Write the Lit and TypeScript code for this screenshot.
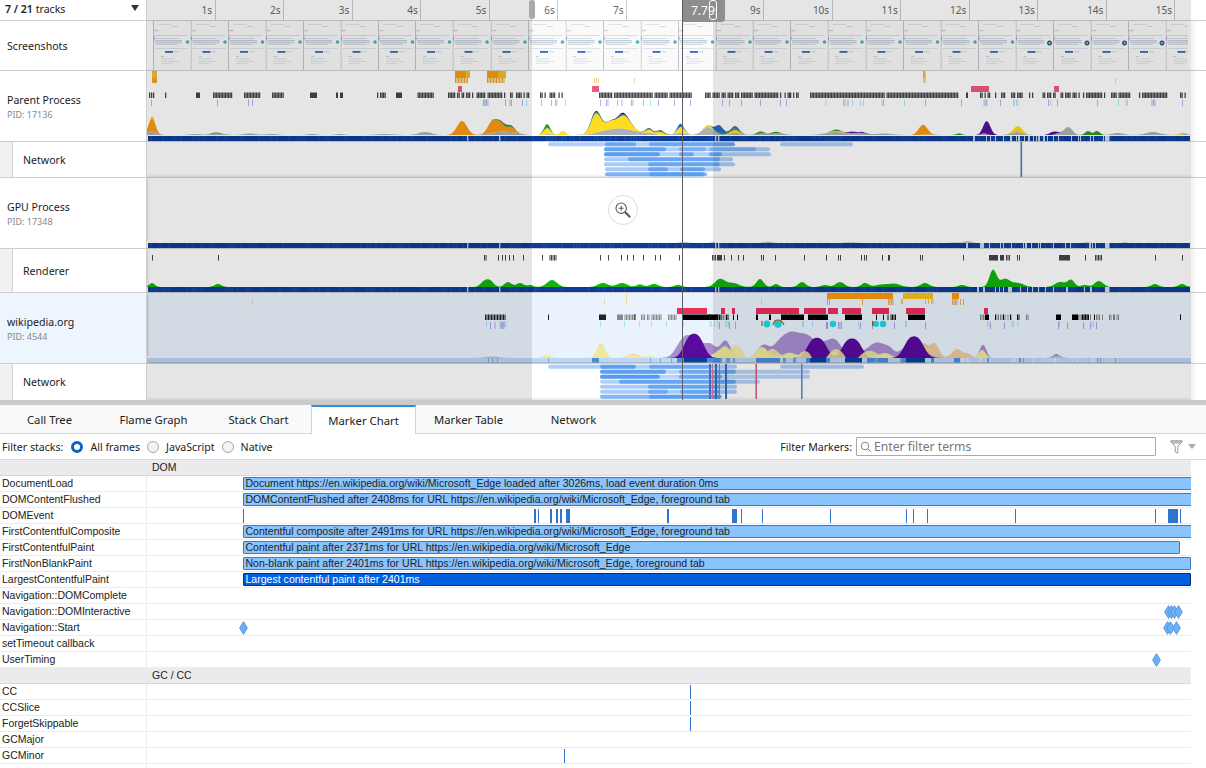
import { LitElement, html, css, svg } from "lit";
import { customElement } from "lit/decorators.js";

type Bump = [number, number, number];
type Layer = { color: string; bumps: Bump[]; stroke?: string };

function rng(seed: number) {
  let s = seed;
  return () => {
    s = (s * 16807) % 2147483647;
    return (s - 1) / 2147483646;
  };
}

function area(layers: Layer[], base: number, x0 = 147, x1 = 1191) {
  const below: number[] = [];
  for (let x = x0; x <= x1; x++) below.push(0);
  return layers.map((l) => {
    let top = "";
    let bottom = "";
    const next = below.slice();
    for (let i = 0; i < next.length; i++) {
      const x = x0 + i;
      let h = 0;
      for (const [c, w, a] of l.bumps) {
        const d = (x - c) / w;
        if (Math.abs(d) < 3.2) h += a * Math.exp(-d * d);
      }
      next[i] = below[i] + h;
      top += `${x},${(base - next[i]).toFixed(2)} `;
    }
    for (let i = next.length - 1; i >= 0; i--) {
      bottom += `${x0 + i},${(base - below[i]).toFixed(2)} `;
      below[i] = next[i];
    }
    return svg`<polygon points="${top}${bottom}" fill="${l.color}" />`;
  });
}

function ticks(
  ranges: number[][],
  y: number,
  h: number,
  color: string,
  seed: number,
  density = 0.62,
  width = 1
) {
  const r = rng(seed);
  const out: unknown[] = [];
  for (const [a, b, d] of ranges) {
    const dn = d === undefined ? density : d;
    if (b === undefined || b - a < 1.5) {
      out.push(svg`<rect x="${a}" y="${y}" width="${width}" height="${h}" fill="${color}" />`);
      continue;
    }
    if (dn >= 1) {
      out.push(svg`<rect x="${a}" y="${y}" width="${b - a}" height="${h}" fill="${color}" />`);
      continue;
    }
    for (let x = a; x < b; x += 1.5) {
      if (r() < dn) out.push(svg`<rect x="${x}" y="${y}" width="${width}" height="${h}" fill="${color}" />`);
    }
  }
  return out;
}

function blocks(list: number[][], y: number, h: number, color: string) {
  return list.map(
    ([a, b]) => svg`<rect x="${a}" y="${y}" width="${b - a}" height="${h}" fill="${color}" />`
  );
}

function sampleBar(y: number, h: number, seed: number, gapFrom = 965) {
  const r = rng(seed);
  const out: unknown[] = [svg`<rect x="148" y="${y}" width="1042" height="${h}" fill="#0b3d98" />`];
  for (let x = 150; x < 1190; x += 3) {
    if (r() < 0.4) out.push(svg`<rect x="${x}" y="${y}" width="2" height="${h}" fill="#1a4fa6" opacity=".6" />`);
  }
  for (const x of [467, 499, 715, 718]) out.push(svg`<rect x="${x}" y="${y}" width="1.4" height="${h}" fill="#dfe8f5" opacity=".8" />`);
  for (let x = gapFrom; x < 1105; x += 1) {
    if (r() < 0.2) out.push(svg`<rect x="${x}" y="${y}" width="1" height="${h}" fill="#e8eef8" opacity=".85" />`);
  }
  out.push(svg`<rect x="1105" y="${y}" width="4.5" height="${h}" fill="#e8eef8" opacity=".9" />`);
  return out;
}

const THUMB_X = [153, 190.5, 228, 265.5, 303, 340.5, 378, 415, 452.5, 490.5, 528, 565.5, 603, 640.5, 678, 715.5, 752.5, 790, 827.5, 865.5, 903, 940.5, 978, 1015.5, 1053, 1090.5, 1128, 1165.5];

function thumbs() {
  return svg`
    <svg class="g" viewBox="147 21 1044 49" width="1044" height="49">
      <defs>
        <g id="th">
          <rect x="0" y="0" width="37.5" height="49" fill="#fafafb" />
          <rect x="0" y="0" width="1" height="49" fill="#c4c4c6" />
          <rect x="5" y="3" width="14" height="1" fill="#e2e2e5" />
          <rect x="19" y="5" width="6" height="1" fill="#d8d8dc" />
          <rect x="0.5" y="9" width="5" height="1.2" fill="#cfcfd3" />
          <rect x="0.5" y="14" width="34" height="1" fill="#dcdce0" />
          <rect x="0.5" y="15.5" width="1" height="4" fill="#b89ae0" />
          <rect x="2" y="17" width="24" height="1" fill="#d5dbe3" />
          <rect x="2" y="19" width="27" height="1.4" fill="#c4cfdc" />
          <rect x="2" y="21" width="27" height="1.4" fill="#ccd6e1" />
          <rect x="3" y="23" width="22" height="1" fill="#d6dce4" />
          <rect x="2" y="27" width="33" height="1" fill="#dfe4ea" />
          <rect x="12" y="30" width="8" height="1.8" fill="#2f6cc2" />
          <rect x="21" y="30.4" width="5" height="1" fill="#d2d5da" />
          <rect x="8" y="35" width="3" height="1" fill="#cfd1d6" />
          <rect x="8" y="37.5" width="14" height="1" fill="#dcdee2" />
          <rect x="8" y="40" width="18" height="1" fill="#e0e2e6" />
          <rect x="8" y="42" width="12" height="1" fill="#e5e6e9" />
        </g>
      </defs>
      ${THUMB_X.map((x, i) => {
        const w = i === THUMB_X.length - 1 ? 23 : 37.5;
        return svg`
          <svg x="${x}" y="21" width="${w}" height="49" viewBox="0 0 ${w} 49"><use href="#th" /></svg>
          ${i >= 23 && i < 27
            ? svg`<circle cx="${x + 34}" cy="43" r="2.2" fill="#1b7d9a" stroke="#123a6b" stroke-width=".6" /><circle cx="${x + 34}" cy="43" r=".8" fill="#e8f4f8" />`
            : i < 27
              ? svg`<circle cx="${x + 34.5}" cy="42" r="1.8" fill="#49b5b0" />`
              : null}
        `;
      })}
      <rect x="1188" y="21" width="3" height="49" fill="#ffffff" />
    </svg>`;
}

function parentGraph() {
  const grey: Layer = {
    color: "#b0b0b0",
    bumps: [[152, 6, 4], [195, 7, 1], [217, 9, 1.5], [250, 9, 1.5], [272, 8, 1], [312, 6, 1], [340, 6, 1], [385, 12, 1], [425, 9, 3], [492, 10, 1.5], [503, 9, 3], [515, 8, 2], [548, 4, 1], [604, 14, 3], [622, 15, 6], [638, 8, 1.5], [650, 7, 2], [680, 8, 2], [708, 8, 8], [735, 8, 2], [762, 7, 1.5], [778, 8, 2], [836, 14, 3], [860, 9, 2], [884, 12, 1.5], [930, 8, 0.5], [984, 4, 1.5], [1017, 8, 3], [1068, 6, 8], [1058, 4, 1.5], [1118, 8, 2], [1153, 10, 3], [1185, 5, 1]]
  };
  const orange: Layer = {
    color: "#fb9a10",
    bumps: [[152, 4.5, 13], [462, 7, 14], [492, 6, 11], [500, 6, 8], [511, 5, 5], [923, 6, 10]]
  };
  const yellow: Layer = {
    color: "#ffdc1f",
    bumps: [[153, 3, 2], [547, 5, 6], [563, 4, 4], [596, 7, 19], [610, 7, 7], [624, 9, 13], [649, 4, 3], [660, 5, 3], [681, 5, 6], [708, 5, 2], [735, 6, 3], [838, 10, 1], [1018, 6, 6], [1182, 5, 1.5]]
  };
  const green: Layer = {
    color: "#2f9a1d",
    bumps: [[216, 7, 1], [506, 9, 1.5], [547, 4, 4], [597, 5, 1], [648, 5, 1], [660, 5, 1], [722, 7, 1.5], [735, 6, 1.5], [760, 5, 2], [775, 5, 1.5], [836, 5, 1.5], [1088, 4, 4], [1097, 4, 4], [959, 4, 1.5]]
  };
  const blue: Layer = {
    color: "#1b6ccb",
    bumps: [[592, 3, .8], [622, 5, 1.5], [680, 4, 3], [719, 5, 7], [735, 5, 1.5]]
  };
  const purple: Layer = {
    color: "#54129a",
    bumps: [[852, 5, 1.5], [862, 5, 1], [987, 5, 13], [1053, 5, 3]]
  };
  const outline: Layer = {
    color: "#1c2440",
    bumps: [[596, 8, 1.3], [622, 9, 1.3], [650, 6, .6], [662, 6, .6], [682, 5, .5], [722, 7, .6], [736, 6, .7], [506, 10, .6]]
  };
  return area([grey, orange, yellow, green, blue, purple, outline], 135);
}

function parent() {
  return svg`
    <svg class="g" viewBox="147 71 1044 70" width="1044" height="70">
      ${blocks([[152, 157]], 71, 7, "#f5bb22")}
      ${blocks([[455, 466], [487, 498]], 71, 7, "#fb9a10")}
      ${blocks([[466, 470], [498, 506]], 71, 7, "#f5bb22")}
      ${ticks([[152, 157, 1], [455, 470, 0.75], [487, 506, 0.75]], 78, 5, "#f0a828", 3)}
      ${ticks([[594], [596], [598], [634], [923, 926, 1], [1115]], 78, 5, "#f4d49a", 4)}
      ${blocks([[923, 925.5]], 71, 7, "#f5bb22")}
      ${blocks([[458, 462], [592, 599], [971, 989], [1054, 1059]], 86, 6, "#f0587e")}
      ${ticks([[149], [151], [153], [165], [196, 200, 1], [213, 232, .9], [244, 260, .92], [272, 284, .95], [310, 317, 1], [336, 338, 1], [340, 343, 1], [377], [380, 386, .9], [396, 402, 1], [416, 435, .95], [448, 485, .85], [486, 530, .6], [540, 545, .7], [548, 564, .6], [599, 692, .9], [702, 790, .85], [790, 800, .7], [810, 958, .97], [966, 968, 1], [980, 1005, .45], [1011, 1022, .75], [1029, 1038, .75], [1041, 1105, .78], [1111, 1130, .9], [1139, 1167, .92], [1180, 1191, .6]], 92.5, 5.5, "#454545", 11, .62, 1.25)}
      ${ticks([[151], [217], [248], [252], [483, 488, .6], [505, 512, .4], [522], [541], [551], [555, 558, .8], [600, 608, .4], [617, 622, .6], [631, 634, .5], [643], [658], [674], [690], [722], [729], [741], [760], [780], [786], [843, 849, .25], [860, 864, .4], [883], [925], [961], [1000], [983, 990, .5], [1012, 1015, .6], [1048, 1058, .2], [1097], [1122, 1126, .3], [1150, 1158, .3], [1182]], 99.5, 6.5, "#b9a5ea", 12, .6, .9)}
      ${ticks([[484, 486, 1], [526], [565], [650, 656, .6], [625, 628, .5], [610, 612, .5], [824, 834, .3], [840, 853, .4], [860, 866, .4], [880, 884, .4], [904], [982, 988, .7], [1016, 1022, .8], [1049, 1059, .3], [1118, 1128, .3]], 99.5, 6.5, "#a0e8f2", 13, .6, .9)}
      ${parentGraph()}
      ${sampleBar(136, 5, 21)}
    </svg>`;
}

type NetBar = [number, number, number, number];
function network(y0: number, off: number, bars: NetBar[], lines: [number, string, number][]) {
  return svg`
    <svg class="g" viewBox="147 ${y0} 1044 35" width="1044" height="35">
      ${bars.map(([row, a, b, o]) => svg`<rect x="${a}" y="${y0 + off + row * 5}" width="${b - a}" height="4" rx="2" fill="#3f8def" opacity="${o}" />`)}
      ${lines.map(([x, c, w]) => svg`<rect x="${x}" y="${y0}" width="${w}" height="35" fill="${c}" />`)}
    </svg>`;
}

function gpu() {
  const faint: Layer = { color: "#c6c6c6", bumps: [[684, 6, 1.2], [713, 4, 1], [768, 6, 1.4], [850, 7, .8], [955, 5, .7], [968, 5, 2], [1087, 3, .7], [1125, 3, .7]] };
  return svg`
    <svg class="g" viewBox="147 178 1044 70" width="1044" height="70">
      <rect x="147" y="179" width="1.5" height="62" fill="#e4eaf2" />
      ${area([faint], 243)}
      ${sampleBar(243, 5, 22)}
    </svg>`;
}

function renderer() {
  const green: Layer = {
    color: "#14b30f",
    bumps: [[152, 4, 4], [218, 5, 3], [484, 5, 5], [490, 5, 6], [508, 5, 5], [520, 5, 4], [530, 4, 2], [552, 7, 7], [603, 7, 4], [622, 7, 4], [640, 5, 2.5], [654, 6, 3], [678, 5, 2], [720, 7, 8], [733, 8, 4], [760, 5, 8], [776, 4, 3], [802, 5, 5], [825, 5, 2], [840, 6, 5], [865, 5, 4], [882, 9, 2.5], [895, 8, 3], [925, 6, 4], [962, 5, 2], [993, 5, 17], [1005, 7, 8], [1018, 8, 4], [1060, 7, 5], [1071, 5, 7], [1085, 5, 2], [1099, 6, 6], [1155, 5, 3], [1182, 5, 3]]
  };
  return svg`
    <svg class="g" viewBox="147 249 1044 43" width="1044" height="43">
      <rect x="147" y="250" width="1.5" height="36" fill="#e4eaf2" />
      ${ticks([[152], [218], [484, 495, .8], [498], [502], [505], [509], [513], [523], [542], [548, 556, .8], [600], [608], [621], [627], [633], [643], [655], [660], [679], [712, 716, .8], [717, 722, 1], [724], [731], [738], [743], [761], [763], [775], [804], [826], [838], [840], [864], [866], [889], [882], [861], [888], [920], [922], [963], [989, 998, 1], [1000, 1004, 1], [1006, 1010, .9], [1017], [1019], [1059, 1070, 1], [1085], [1095, 1102, .9], [1155], [1182]], 255, 5.5, "#444", 41)}
      ${area([green], 287)}
      ${sampleBar(287, 5, 23)}
    </svg>`;
}

function wiki() {
  const tan: Layer = { color: "#ecca9f", bumps: [[634, 8, 4], [935, 6, 13], [922, 9, 15], [957, 7, 9], [968, 5, 4], [1058, 5, 1]] };
  const pale: Layer = { color: "#f0ea98", bumps: [[547, 6, 3], [601, 6, 14], [634, 9, 3], [650, 4, 2], [725, 8, 11], [715, 5, 3], [762, 8, 11], [790, 8, 5], [808, 8, 6], [833, 8, 6], [860, 9, 5], [885, 8, 5], [982, 5, 8]] };
  const greenL: Layer = { color: "#b4ccb0", bumps: [[492, 10, 1.5], [601, 3, .5], [725, 5, 1.5], [780, 8, 1.5], [870, 8, 1.5], [1057, 6, 2]] };
  const lav: Layer = { color: "#a88ed0", bumps: [[682, 9, 10], [694, 14, 20], [710, 6, 8], [726, 7, 5], [780, 11, 13], [798, 14, 21], [822, 13, 14], [838, 9, 9], [876, 10, 13], [890, 6, 5], [913, 14, 16], [984, 4, 6], [1056, 4, 2], [767, 5, 2]] };
  const dark: Layer = { color: "#5a0a9e", bumps: [[689, 8, 18], [699, 8, 18], [812, 8, 15], [822, 8, 15], [847, 8, 14.5], [857, 8, 14.5], [909, 8, 16], [919, 8, 16]] };
  return svg`
    <svg class="g" viewBox="147 293 1044 70" width="1044" height="70">
      <rect x="147" y="294" width="1.5" height="62" fill="#cbd9ea" />
      ${blocks([[827, 893], [952, 959]], 293, 6, "#fb9a10")}
      ${blocks([[903, 933]], 293, 6, "#f8c21e")}
      ${ticks([[827], [829], [862], [888, 893, .8], [952, 957, .8], [960], [963]], 299, 6, "#e8aa50", 51)}
      ${ticks([[901, 903, 1], [925, 933, .8]], 299, 5, "#f0c830", 52)}
      ${ticks([[252], [604], [761]], 299, 6, "#e6d2a8", 53)}
      ${ticks([[626]], 293, 12, "#eedc9c", 54)}
      ${blocks([[677, 707], [721, 725], [732, 735], [756, 799], [804, 826], [828, 838], [842, 861], [872, 889], [906, 925], [984, 988]], 308, 6, "#f02c58")}
      ${ticks([[485, 506, .95], [548], [599, 606, 1], [617, 623, .6], [634, 636, 1]], 314.5, 5.5, "#222", 55, .6)}
      ${ticks([[617, 677, .65], [720, 725, .7], [980, 987, .6], [992, 999, .4], [1000, 1015, .4], [1026, 1030, .7], [1078, 1104, .6], [1109, 1122, .4], [1180]], 314.5, 5.5, "#8a8a8a", 56)}
      ${blocks([[683, 707], [781, 804], [808, 828], [845, 862], [908, 925], [756, 758], [769, 771], [707, 718], [985, 989], [1056, 1061], [1072, 1078]], 314.5, 5.5, "#000")}
      ${ticks([[709, 712, .8], [716, 722, .6], [726, 730, .7], [733], [737], [785], [790], [876], [883, 900, .6], [995], [1003], [1010], [1017, 1020, .7], [1082, 1100, .7], [1112, 1115, .7], [1180]], 314.5, 5.5, "#111", 57)}
      ${ticks([[486, 506, .35], [600, 603, .7], [624], [639], [651], [666], [683], [708, 720, .7], [725, 730, .7], [812], [802, 804, 1], [858], [905], [906], [987, 989, .8], [1010, 1018, .4], [1058, 1060, 1], [1087, 1095, .4]], 321, 6, "#9ae6f0", 58, .6, .9)}
      ${ticks([[490, 505, .3], [716, 720, .6], [729], [735], [826, 828, 1], [838, 842, .5], [860], [872], [877, 886, .4], [894], [925], [990], [1004], [1058, 1061, .8], [1067], [1083], [1090], [1096]], 322, 7, "#ac98ea", 59, .6, .9)}
      <circle cx="767" cy="324" r="3.4" fill="#16dfe8" /><circle cx="778" cy="324" r="3.8" fill="#16dfe8" />
      <path d="M762 321 v5 M773 325 q1-5 5-5 q4 0 6 5" stroke="#9a5a14" stroke-width="1.1" fill="none" />
      <circle cx="833" cy="324" r="3.2" fill="#16dfe8" /><circle cx="876" cy="324" r="3" fill="#16dfe8" /><circle cx="883" cy="324" r="3.2" fill="#16dfe8" />
      <rect x="872" y="321" width="1.4" height="5" fill="#9a5a14" />
      ${area([tan], 358)}
      ${area([pale, greenL, lav], 358)}
      ${area([dark], 358)}
      <path d="M725 358 q6-13 11-13 q5 0 10 13z M764 358 q6-15 14-6 q6 6 12 6z M826 358 q6-9 10-9 q5 0 10 9z M858 358 q7-9 14-7 q6 2 13 7z M796 358 q5-7 9-7 q4 0 7 7z" fill="#f0ea98" opacity=".85" />
      <rect x="147" y="358" width="1044" height="5" fill="#bcd6f4" />
      ${ticks([[488], [492], [497], [548], [660], [650], [671], [682], [688], [694], [1019], [1023], [1097], [1100], [1107], [1115]], 358, 5, "#7ea8d8", 60)}
      ${ticks([[961, 970, .6], [975, 990, .4], [1010, 1016, .5], [1025, 1110, .35]], 358, 5, "#dfeaf8", 61)}
      ${blocks([[592, 599], [677, 684], [707, 720], [756, 780], [806, 830], [867, 888], [902, 925], [931, 934], [954, 960]], 358, 5, "#4a8de0")}
      ${blocks([[684, 707], [810, 826], [845, 862], [906, 925]], 358, 5, "#0a3e9b")}
      ${blocks([[720, 722], [726, 730], [733, 735], [783, 786], [793, 796], [875, 878], [900, 903], [987, 989], [1019, 1021]], 358, 5, "#6f9fdc")}
      <rect x="147" y="362.4" width="1044" height=".9" fill="#9aa8b8" />
    </svg>`;
}

const NET_TOP: NetBar[] = [
  [0, 548, 735, .42], [0, 605, 636, .6], [0, 649, 735, .6], [0, 780, 853, .42],
  [1, 604, 770, .42], [1, 604, 666, .65], [1, 679, 706, .5], [1, 709, 756, .45],
  [2, 604, 771, .42], [2, 604, 660, .75], [2, 679, 694, .65], [2, 709, 722, .65],
  [3, 604, 733, .45], [3, 628, 720, .6],
  [4, 604, 735, .45], [4, 648, 720, .6],
  [5, 605, 721, .45], [5, 648, 668, .6], [5, 680, 705, .65],
  [6, 605, 707, .65], [6, 649, 704, .6]
];

const NET_BOTTOM: NetBar[] = [
  [0, 548, 737, .42], [0, 600, 636, .7], [0, 649, 712, .6], [0, 780, 864, .42],
  [1, 600, 810, .38], [1, 600, 666, .75], [1, 679, 736, .6],
  [2, 600, 810, .38], [2, 600, 660, .8], [2, 679, 722, .65],
  [3, 600, 760, .4], [3, 619, 736, .65],
  [4, 600, 737, .45], [4, 648, 720, .6],
  [5, 600, 737, .45], [5, 648, 668, .55], [5, 680, 720, .6],
  [6, 600, 722, .65], [6, 649, 720, .6]
];

const RULER = Array.from({ length: 15 }, (_, i) => (i === 7 ? "" : `${i + 1}s`));

const ROWS: { kind?: "h"; name: string; bar?: string; end?: number; sel?: boolean; t?: number[][]; d?: number[] }[] = [
  { kind: "h", name: "DOM" },
  { name: "DocumentLoad", bar: "Document https://en.wikipedia.org/wiki/Microsoft_Edge loaded after 3026ms, load event duration 0ms" },
  { name: "DOMContentFlushed", bar: "DOMContentFlushed after 2408ms for URL https://en.wikipedia.org/wiki/Microsoft_Edge, foreground tab" },
  { name: "DOMEvent", t: [[243, 1], [534, 2], [537.5, 1.5], [550, 2], [556, 1.5], [560, 1.5], [566, 4], [667, 2], [732, 5], [741, 1], [762, 1], [830, 1], [906, 1], [913, 1], [927, 1], [1015, 1], [1155, 1], [1168, 10], [1180, 1]] },
  { name: "FirstContentfulComposite", bar: "Contentful composite after 2491ms for URL https://en.wikipedia.org/wiki/Microsoft_Edge, foreground tab" },
  { name: "FirstContentfulPaint", bar: "Contentful paint after 2371ms for URL https://en.wikipedia.org/wiki/Microsoft_Edge", end: 1180 },
  { name: "FirstNonBlankPaint", bar: "Non-blank paint after 2401ms for URL https://en.wikipedia.org/wiki/Microsoft_Edge, foreground tab", end: 1191 },
  { name: "LargestContentfulPaint", bar: "Largest contentful paint after 2401ms", sel: true, end: 1191 },
  { name: "Navigation::DOMComplete" },
  { name: "Navigation::DOMInteractive", d: [1168, 1171, 1174, 1178] },
  { name: "Navigation::Start", d: [243, 1167, 1170, 1176] },
  { name: "setTimeout callback" },
  { name: "UserTiming", d: [1156] },
  { kind: "h", name: "GC / CC" },
  { name: "CC", t: [[690, 1]] },
  { name: "CCSlice", t: [[690, 1]] },
  { name: "ForgetSkippable", t: [[690, 1]] },
  { name: "GCMajor" },
  { name: "GCMinor", t: [[564, 1]] },
  { name: "" }
];

const TABS = ["Call Tree", "Flame Graph", "Stack Chart", "Marker Chart", "Marker Table", "Network"];

@customElement("app-root")
export class AppRoot extends LitElement {
  static styles = css`
    :host {
      display: block;
      width: 1206px;
      height: 768px;
      overflow: hidden;
      background: #fff;
      font-family: "Noto Sans", "Open Sans", sans-serif;
      font-size: 10.6px;
      color: #1a1a1e;
    }
    .timeline { position: relative; height: 400px; overflow: hidden; }
    .row { display: flex; border-bottom: 1px solid #cfcfcf; box-sizing: border-box; }
    .label {
      width: 147px; flex: none; box-sizing: border-box; border-right: 1px solid #cfcfcf;
      display: flex; flex-direction: column; justify-content: center; padding-left: 7px;
      background: #fff; line-height: 14px;
    }
    .label.proc { padding-top: 2px; }
    .label small { font-size: 9px; color: #888; line-height: 15px; }
    .sub { background: #f1f1f2; padding-left: 12px; justify-content: stretch; flex-direction: row; align-items: stretch; }
    .sub span { flex: 1; background: #fff; border-left: 1px solid #d4d4d4; padding-left: 10px; display: flex; align-items: center; }
    .label.on { background: #edf5fe; }
    .track { width: 1044px; flex: none; position: relative; background: #fff; }
    .track.on { background: #eaf3fd; }
    .track.net { box-shadow: inset 0 -3px 3px -2px rgba(0, 0, 0, .12); }
    .g { display: block; filter: blur(.3px); }
    .hdr { height: 21px; }
    .hdr .label { flex-direction: row; justify-content: space-between; align-items: center; padding: 0 7px 2px 5px; }
    .hdr b { font-weight: 600; }
    .caret { width: 0; height: 0; border-left: 4.5px solid transparent; border-right: 4.5px solid transparent; border-top: 6px solid #333; margin-bottom: 2px; }
    .ruler { display: flex; width: 1044px; flex: none; }
    .ruler div {
      flex: 0 0 68.57px; box-sizing: border-box; text-align: right; padding: 3px 2.5px 0 0;
      border-right: 1px solid #c9c9c9; color: #666; font-size: 10px; line-height: 14px;
    }
    .screens { height: 50px; }
    .p70 { height: 71px; }
    .p36 { height: 36px; }
    .p44 { height: 44px; }
    .p35 { height: 36px; border-bottom: 0; }
    .dim { position: absolute; top: 0; height: 400px; background: rgba(0, 0, 0, .1); pointer-events: none; }
    .dim.l { left: 147px; width: 385px; }
    .dim.r { left: 713px; width: 478px; }
    .edge { position: absolute; top: 21px; left: 1191px; width: 6px; height: 379px; background: linear-gradient(to right, rgba(0,0,0,.06), rgba(0,0,0,0)); }
    .vline { position: absolute; left: 682px; top: 0; width: 1px; height: 400px; background: #5c5c66; }
    .hover {
      position: absolute; left: 682px; top: 0; width: 43px; height: 22px; box-sizing: border-box;
      background: #8e8e8e; color: #fff; border-radius: 0 0 4px 0; font-size: 12px; line-height: 21px; padding-left: 9px;
    }
    .hover span { display: block; width: 25px; overflow: hidden; white-space: nowrap; }
    .grip { position: absolute; top: 0; height: 19px; box-sizing: border-box; border-radius: 3px; }
    .grip.a { left: 529px; width: 6px; background: #aaa; }
    .grip.b { left: 709px; width: 8px; height: 20px; border: 1.5px solid #fff; background: transparent; }
    .zoom {
      position: absolute; left: 608px; top: 195px; width: 30px; height: 30px; box-sizing: border-box;
      border-radius: 50%; background: #fff; border: 1px solid #dcdcdc; display: flex; align-items: center; justify-content: center;
    }
    .split { height: 5px; background: #cbcbcb; }
    .tabs { height: 29px; display: flex; background: #f9f9fa; border-bottom: 1px solid #d4d4d4; box-sizing: border-box; font-size: 11.3px; }
    .tab { flex: 0 0 105px; text-align: center; line-height: 29px; color: #222; }
    .tab:first-child { flex-basis: 101px; padding-right: 2px; box-sizing: border-box; }
    .tab.sel { background: #fff; border-left: 1px solid #d4d4d4; border-right: 1px solid #d4d4d4; border-top: 2px solid #2f8fe8; line-height: 27px; box-sizing: border-box; height: 29px; }
    .filters { height: 26px; display: flex; align-items: center; border-bottom: 1px solid #d8d8d8; box-sizing: border-box; padding-left: 2px; color: #222; }
    .radio { width: 12px; height: 12px; border-radius: 50%; box-sizing: border-box; border: 1px solid #a8a8a8; background: #f3f3f3; margin: 0 7px 0 0; }
    .radio.on { border: 3.5px solid #0a64c8; background: #fff; }
    .opt { display: flex; align-items: center; margin-right: 7px; }
    .flab { margin-right: 8px; }
    .spacer { flex: 1; }
    .fm { margin-right: 4px; }
    .input { width: 300px; height: 19px; border: 1px solid #aaa; border-radius: 1px; box-sizing: border-box; display: flex; align-items: center; padding-left: 3px; gap: 2px; color: #777; font-size: 12.2px; }
    .fun { display: flex; align-items: center; margin-left: 14px; margin-right: 10px; gap: 5px; }
    .fcaret { width: 0; height: 0; border-left: 4px solid transparent; border-right: 4px solid transparent; border-top: 5px solid #aaa; }
    .chart { font-family: "Liberation Sans", Arial, sans-serif; font-size: 10.5px; line-height: 15px; color: #222; }
    .cr { display: flex; height: 16px; box-sizing: border-box; width: 1191px; border-bottom: 1px solid #ececee; }
    .cr.h { background: #ebebed; border-bottom: 1px solid #d8d8da; padding-left: 152px; }
    .cn { width: 147px; flex: none; box-sizing: border-box; padding-left: 2px; border-right: 1px solid #ececee; white-space: nowrap; }
    .cc { position: relative; flex: 1; overflow: hidden; }
    .bar {
      position: absolute; left: 96px; right: -2px; top: 1px; height: 13px; box-sizing: border-box;
      background: #8ac4ff; border: 1px solid #3f79bd; border-radius: 1px; padding-left: 1.5px; line-height: 11px; font-size: 10.55px; white-space: nowrap; overflow: hidden;
    }
    .bar.s { background: #0060df; border-color: #0a2f66; color: #fff; }
    .tk { position: absolute; top: 1px; height: 14px; background: #2f74cf; }
    .dm { position: absolute; top: 1px; width: 9px; height: 14px; }
  `;

  render() {
    return html`
      <div class="timeline">
        <div class="row hdr">
          <div class="label"><span><b>7 / 21</b> tracks</span><i class="caret"></i></div>
          <div class="ruler">${RULER.map((r) => html`<div>${r}</div>`)}</div>
        </div>
        <div class="row screens">
          <div class="label">Screenshots</div>
          <div class="track">${thumbs()}</div>
        </div>
        <div class="row p70">
          <div class="label proc">Parent Process<small>PID: 17136</small></div>
          <div class="track">${parent()}</div>
        </div>
        <div class="row p36">
          <div class="label sub"><span>Network</span></div>
          <div class="track net">${network(142, 0.3, NET_TOP, [[1020.5, "#4d7fb8", 1.6]])}</div>
        </div>
        <div class="row p70">
          <div class="label proc">GPU Process<small>PID: 17348</small></div>
          <div class="track">${gpu()}</div>
        </div>
        <div class="row p44">
          <div class="label sub"><span>Renderer</span></div>
          <div class="track">${renderer()}</div>
        </div>
        <div class="row p70">
          <div class="label on proc">wikipedia.org<small>PID: 4544</small></div>
          <div class="track on">${wiki()}</div>
        </div>
        <div class="row p35">
          <div class="label sub"><span>Network</span></div>
          <div class="track net">${network(364, 0.7, NET_BOTTOM, [[709, "#3f6fb0", 2], [712, "#c86a9a", 1], [715, "#2f70c0", 2], [719, "#d0608a", 1], [725, "#2f70c0", 2], [755.5, "#d0506a", 1.4], [801, "#5f8fc8", 1.6]])}</div>
        </div>
        <div class="dim l"></div>
        <div class="dim r"></div>
        <div class="edge"></div>
        <div class="zoom">
          <svg width="18" height="18" viewBox="0 0 18 18" fill="none" stroke="#5a5a5a">
            <circle cx="7.2" cy="7.2" r="5.2" stroke-width="1.1" />
            <path d="M4.7 7.2h5M7.2 4.7v5" stroke-width="1.1" />
            <path d="M11 11l5.2 5.2" stroke-width="2.2" />
          </svg>
        </div>
        <div class="hover"><span>7.79s</span></div>
        <div class="vline"></div>
        <div class="grip a"></div>
        <div class="grip b"></div>
      </div>
      <div class="split"></div>
      <div class="tabs">
        ${TABS.map((t) => html`<div class="tab ${t === "Marker Chart" ? "sel" : ""}">${t}</div>`)}
      </div>
      <div class="filters">
        <span class="flab">Filter stacks:</span>
        <label class="opt"><i class="radio on"></i>All frames</label>
        <label class="opt"><i class="radio"></i>JavaScript</label>
        <label class="opt"><i class="radio"></i>Native</label>
        <span class="spacer"></span>
        <span class="fm">Filter Markers:</span>
        <div class="input">
          <svg width="12" height="12" viewBox="0 0 12 12" fill="none" stroke="#888" stroke-width="1">
            <circle cx="5" cy="5" r="3.8" /><path d="M8 8l3.2 3.2" />
          </svg>
          <span>Enter filter terms</span>
        </div>
        <div class="fun">
          <svg width="13" height="14" viewBox="0 0 13 14" fill="none" stroke="#999" stroke-width="1">
            <path d="M.7 1h11.6L7.8 6.6V13L5.2 11.8V6.6z" />
            <path d="M.7 1h11.6l-1.6 2H2.3z" fill="#ddd" />
          </svg>
          <i class="fcaret"></i>
        </div>
      </div>
      <div class="chart">
        ${ROWS.map((r) =>
          r.kind === "h"
            ? html`<div class="cr h">${r.name}</div>`
            : html`<div class="cr">
                <div class="cn">${r.name}</div>
                <div class="cc">
                  ${r.bar
                    ? html`<div class="bar ${r.sel ? "s" : ""}" style=${r.end ? `right:${1191 - r.end}px` : ""}>${r.bar}</div>`
                    : null}
                  ${(r.t || []).map(([x, w]) => html`<div class="tk" style="left:${x - 147}px;width:${w}px"></div>`)}
                  ${(r.d || []).map(
                    (x) => html`<svg class="dm" style="left:${x - 147 - 4.5}px" viewBox="0 0 9 14">
                      <path d="M4.5 .6L8.4 7 4.5 13.4 .6 7z" fill="#6cb0f7" stroke="#4f8fd8" stroke-width=".8" />
                    </svg>`
                  )}
                </div>
              </div>`
        )}
      </div>
    `;
  }
}
